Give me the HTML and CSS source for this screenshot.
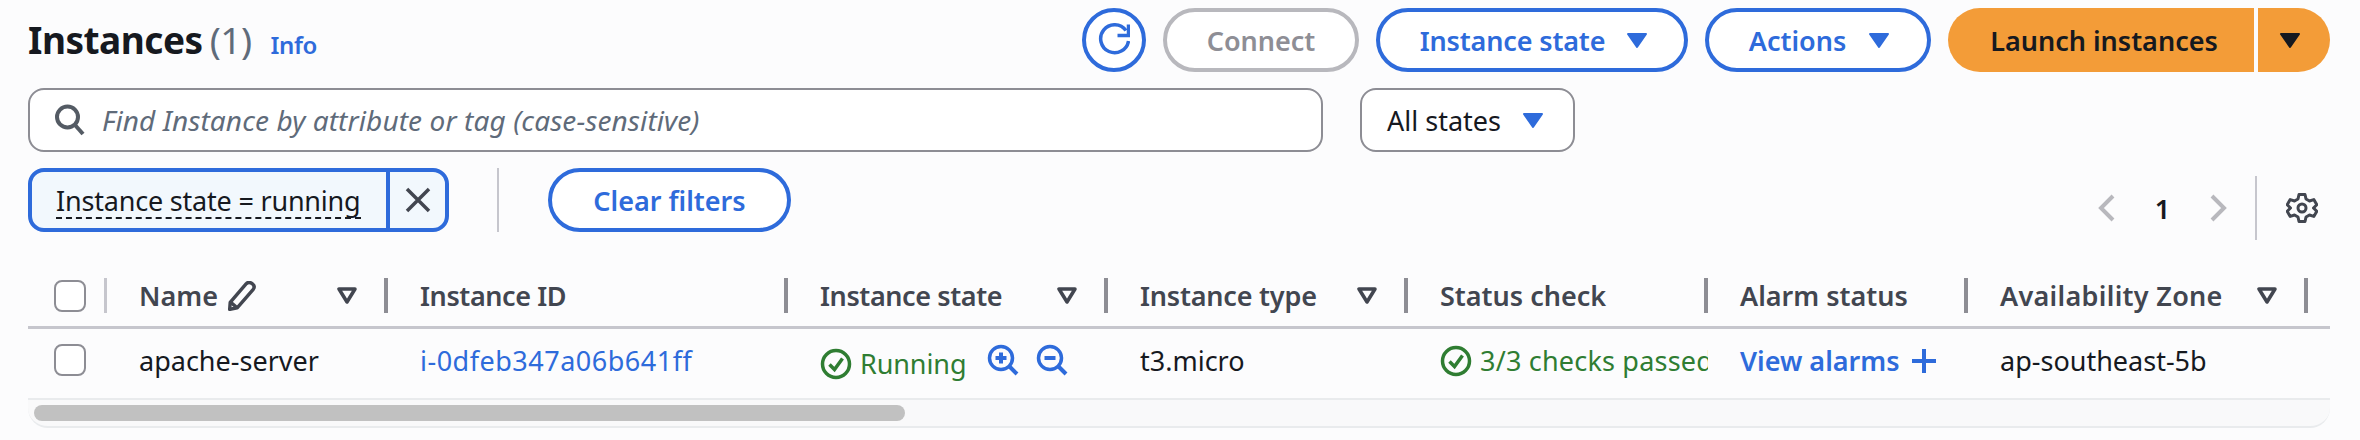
FILE: index.html
```html
<!DOCTYPE html>
<html lang="en">
<head>
<meta charset="utf-8">
<title>Instances</title>
<link rel="stylesheet" href="styles.css">
</head>
<body>
<main class="page">
  <div class="toolbar">
    <h1 class="title">Instances <span class="count">(1)</span></h1>
    <a class="info">Info</a>
    <div class="actions">
      <button class="btn round"><svg class="i-refresh" viewBox="0 0 32 34"><path d="M28 7.500A14 14 0 1 0 30.500 18"/><path d="M30.500 1.500V12.500H19.500"/></svg></button>
      <button class="btn disabled connect">Connect</button>
      <button class="btn state">Instance state<svg class="caret" viewBox="0 0 22 17"><path d="M2 2H20L11 15Z"/></svg></button>
      <button class="btn act">Actions<svg class="caret" viewBox="0 0 22 17"><path d="M2 2H20L11 15Z"/></svg></button>
      <div class="split">
        <button class="launch">Launch instances</button>
        <button class="launch-caret"><svg class="caret dark" viewBox="0 0 22 17"><path d="M2 2H20L11 15Z"/></svg></button>
      </div>
    </div>
  </div>

  <div class="search-row">
    <div class="search">
      <svg class="i-search" viewBox="0 0 32 34"><circle cx="13.500" cy="14" r="10.500"/><path d="M21 22L29 31"/></svg>
      <span class="placeholder">Find Instance by attribute or tag (case-sensitive)</span>
    </div>
    <div class="select">All states<svg class="caret" viewBox="0 0 22 17"><path d="M2 2H20L11 15Z"/></svg></div>
  </div>

  <div class="filter-row">
    <div class="token">
      <span class="token-label"><span class="dashed">Instance state = running</span></span>
      <span class="token-x"><svg viewBox="0 0 28 28"><path d="M3 3L25 25M25 3L3 25"/></svg></span>
    </div>
    <span class="vdiv"></span>
    <button class="btn clear">Clear filters</button>
    <div class="pager">
      <svg class="chev" viewBox="0 0 18 28"><path d="M15 2L3 14L15 26"/></svg>
      <span class="page-no">1</span>
      <svg class="chev next" viewBox="0 0 18 28"><path d="M3 2L15 14L3 26"/></svg>
      <span class="pager-div"></span>
      <svg class="gear" viewBox="0 0 32 32"><path d="M13 2.500H19L20 7L23.500 9L27.800 7.600L30.800 12.700L27.500 16L30.800 19.300L27.800 24.400L23.500 23L20 25L19 29.500H13L12 25L8.500 23L4.200 24.400L1.200 19.300L4.500 16L1.200 12.700L4.200 7.600L8.500 9L12 7Z"/><circle cx="16" cy="16" r="4"/></svg>
    </div>
  </div>

  <section class="table">
    <div class="grid head">
      <div class="th first"><span class="cb"></span></div>
      <div class="th"><span class="th-text">Name</span><svg class="pencil" viewBox="0 0 28 28"><path d="M3 20L18 2.500C19.500 1 21.500 1 23.500 2.500C25.500 4 25.800 6 24.500 7.800L9.500 25L2.500 26.500Z"/><path d="M3.500 20L9.500 25"/></svg><svg class="sort" viewBox="0 0 20 17"><path d="M2 2H18L10 15Z"/></svg></div>
      <div class="th"><span class="th-text tight">Instance ID</span></div>
      <div class="th"><span class="th-text tight">Instance state</span><svg class="sort" viewBox="0 0 20 17"><path d="M2 2H18L10 15Z"/></svg></div>
      <div class="th"><span class="th-text snug">Instance type</span><svg class="sort" viewBox="0 0 20 17"><path d="M2 2H18L10 15Z"/></svg></div>
      <div class="th"><span class="th-text">Status check</span></div>
      <div class="th"><span class="th-text">Alarm status</span></div>
      <div class="th"><span class="th-text wide">Availability Zone</span><svg class="sort" viewBox="0 0 20 17"><path d="M2 2H18L10 15Z"/></svg></div>
    </div>
    <div class="grid row">
      <div class="td first"><span class="cb"></span></div>
      <div class="td">apache-server</div>
      <div class="td"><a class="link id">i-0dfeb347a06b641ff</a></div>
      <div class="td state-cell">
        <span class="status running"><svg class="ok" viewBox="0 0 32 32"><circle cx="16" cy="16" r="13.500"/><path d="M9.500 16.500L14.500 21.500L22.500 10.500"/></svg>Running</span>
        <svg class="zoom z-in" viewBox="0 0 32 32"><circle cx="14" cy="14" r="11.500"/><path class="thick" d="M22.500 22.500L30 30"/><path class="sign" d="M8.500 14H19.500M14 8.500V19.500"/></svg>
        <svg class="zoom z-out" viewBox="0 0 32 32"><circle cx="14" cy="14" r="11.500"/><path class="thick" d="M22.500 22.500L30 30"/><path class="sign" d="M8.500 14H19.500"/></svg>
      </div>
      <div class="td">t3.micro</div>
      <div class="td clip"><span class="status checks"><svg class="ok" viewBox="0 0 32 32"><circle cx="16" cy="16" r="13.500"/><path d="M9.500 16.500L14.500 21.500L22.500 10.500"/></svg>3/3 checks passed</span></div>
      <div class="td"><a class="link alarms">View alarms</a><svg class="plus" viewBox="0 0 24 24"><path d="M12 0V24M0 12H24"/></svg></div>
      <div class="td">ap-southeast-5b</div>
    </div>
    <div class="scroll"><div class="thumb"></div></div>
  </section>
</main>
</body>
</html>
```
FILE: styles.css
```css
* { box-sizing: border-box; }
html, body { margin: 0; background: #fcfcfd; }
body {
  font-family: "Noto Sans", sans-serif;
  font-size: 27px;
  color: #16191f;
  width: 2360px;
  height: 440px;
  overflow: hidden;
}
.page { padding: 8px 30px 0 28px; }
button { font: inherit; letter-spacing: inherit; margin: 0; }
svg { display: block; flex: none; fill: none; }

.toolbar { display: flex; align-items: center; height: 64px; }
.title { margin: 0; font-size: 37px; font-weight: 700; letter-spacing: -0.5px; line-height: 64px; white-space: nowrap; }
.count { font-weight: 400; color: #5f6b7a; margin-left: -2px; }
.info { margin-left: 19px; margin-top: 8px; font-size: 24px; font-weight: 600; letter-spacing: -0.4px; color: #2e6bdb; }
.actions { display: flex; gap: 17px; margin-left: auto; }

.btn {
  height: 64px;
  border: 4px solid #2e6bdb;
  border-radius: 32px;
  background: #fff;
  color: #2e6bdb;
  font-weight: 600;
  padding: 0;
  display: flex;
  align-items: center;
  justify-content: center;
}
.round { width: 64px; }
.i-refresh { width: 32px; height: 34px; stroke: #2e6bdb; stroke-width: 3.500; }
.disabled { width: 196px; border-color: #b8b8bd; color: #8e8e95; }
.state { width: 312px; gap: 21px; padding-left: 4px; letter-spacing: -0.15px; }
.act { width: 226px; gap: 22px; padding-left: 3px; }
.caret { width: 22px; height: 17px; fill: #2e6bdb; stroke: #2e6bdb; stroke-width: 2; stroke-linejoin: round; }
.caret.dark { fill: #16191f; stroke: #16191f; }
.split { display: flex; gap: 4px; }
.launch, .launch-caret {
  height: 64px;
  border: 0;
  background: #f39c38;
  color: #16191f;
  font-weight: 600;
  padding: 0;
  display: flex;
  align-items: center;
  justify-content: center;
}
.launch { width: 306px; border-radius: 32px 0 0 32px; padding-left: 6px; }
.launch-caret { width: 72px; border-radius: 0 32px 32px 0; padding-right: 8px; }

.search-row { display: flex; gap: 37px; margin-top: 16px; height: 64px; }
.search {
  width: 1295px;
  border: 2px solid #8d8d94;
  border-radius: 16px;
  background: #fff;
  display: flex;
  align-items: center;
  padding-left: 24px;
  gap: 16px;
}
.i-search { width: 32px; height: 34px; stroke: #545b64; stroke-width: 4; }
.placeholder { font-style: italic; font-size: 28px; letter-spacing: 0.1px; color: #5f6b7a; }
.select {
  width: 215px;
  border: 2px solid #8d8d94;
  border-radius: 16px;
  background: #fff;
  display: flex;
  align-items: center;
  padding-left: 25px;
  gap: 21px;
}

.filter-row { display: flex; align-items: flex-start; margin-top: 16px; height: 72px; }
.token {
  display: flex;
  width: 421px;
  height: 64px;
  border: 4px solid #2e6bdb;
  border-radius: 16px;
  background: #f2f8fd;
}
.token-label { width: 358px; padding-left: 24px; display: flex; align-items: center; border-right: 4px solid #2e6bdb; }
.dashed { border-bottom: 2px dashed #16191f; line-height: 32px; margin-top: 4px; white-space: nowrap; letter-spacing: -0.2px; }
.token-x { flex: 1; display: flex; align-items: center; justify-content: center; }
.token-x svg { width: 28px; height: 28px; stroke: #424650; stroke-width: 3.500; }
.vdiv { width: 2px; height: 64px; background: #c6c6cd; margin-left: 48px; }
.clear { width: 243px; margin-left: 49px; }
.pager { display: flex; align-items: center; height: 64px; margin-top: 8px; margin-left: auto; }
.chev { width: 18px; height: 28px; stroke: #b8b8bd; stroke-width: 4; }
.page-no { width: 93px; text-align: center; font-weight: 600; }
.pager-div { width: 2px; height: 64px; background: #c6c6cd; margin-left: 28px; }
.gear { width: 32px; height: 32px; stroke: #424650; stroke-width: 3; stroke-linejoin: round; margin-left: 29px; margin-right: 12px; }

.table { margin-top: 38px; }
.grid { display: grid; grid-template-columns: 79px 281px 400px 320px 300px 300px 260px 340px 21px; }
.head { height: 51px; border-bottom: 3px solid #c6c6cd; }
.th {
  height: 35px;
  display: flex;
  align-items: center;
  padding: 0 27px 0 32px;
  border-right: 4px solid #8d8d94;
  color: #424650;
  font-weight: 600;
}
.th.first { padding: 0 0 0 26px; border-right: 3px solid #c6c6cd; }
.th-text { white-space: nowrap; }
.tight { letter-spacing: -0.4px; }
.snug { letter-spacing: -0.2px; }
.wide { letter-spacing: 0.3px; }
.sort { width: 20px; height: 17px; margin-left: auto; stroke: #424650; stroke-width: 3.500; stroke-linejoin: round; }
.pencil { width: 30px; height: 30px; margin-left: 9px; stroke: #424650; stroke-width: 3.200; stroke-linejoin: round; }
.cb { display: block; width: 32px; height: 32px; border: 2px solid #8d8d94; border-radius: 8px; background: #fff; }

.row { height: 71px; border-bottom: 2px solid #e9ebed; align-items: center; }
.td { display: flex; align-items: center; padding-left: 32px; white-space: nowrap; margin-bottom: 6px; }
.td.first { padding-left: 26px; margin-bottom: 8px; }
.state-cell { margin-bottom: 0; }
.link { color: #2e6bdb; }
.id { letter-spacing: 0.5px; }
.alarms { font-weight: 600; }
.plus { width: 24px; height: 24px; margin-left: 12px; stroke: #2e6bdb; stroke-width: 4; }
.status { display: flex; align-items: center; gap: 8px; color: #2f7d32; letter-spacing: -0.1px; }
.checks { letter-spacing: 0.2px; }
.running { width: 167px; }
.ok { width: 32px; height: 32px; stroke: #2f7d32; stroke-width: 3.500; }
.clip { overflow: hidden; margin-left: 32px; padding-left: 0; }
.zoom { width: 32px; height: 32px; stroke: #2e6bdb; stroke-width: 3.500; margin-top: -8px; }
.z-out { margin-left: 17px; }
.thick { stroke-width: 4; }
.sign { stroke-width: 4; }

.scroll { height: 28px; padding: 5px 0 0 6px; background: #f9f9fa; border-bottom: 2px solid #e9ebed; border-radius: 0 0 20px 20px; }
.thumb { width: 871px; height: 16px; border-radius: 8px; background: #c1c1c1; }
```
